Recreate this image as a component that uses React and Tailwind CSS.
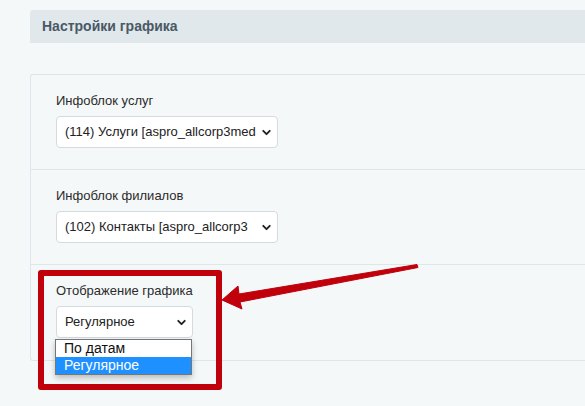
import { ChevronDown } from 'lucide-react';

function FakeSelect({ value, width }) {
  return (
    <div
      className={`${width} h-[32px] bg-white border border-[#d3dbe0] rounded-[4px] flex items-center justify-between pl-[8px] pr-[4px] text-[13px] text-[#222]`}
    >
      <span className="whitespace-nowrap">{value}</span>
      <ChevronDown size={13} strokeWidth={3.5} className="shrink-0 ml-[3px] text-[#222]" />
    </div>
  );
}

function Row({ label, children, last }) {
  return (
    <div className={`h-[95px] pl-[25px] pt-[18px] relative ${last ? '' : 'border-b border-[#dde6ea]'}`}>
      <div className="text-[13px] leading-[16px] text-[#2b2b2b] mb-[7px]">{label}</div>
      {children}
    </div>
  );
}

export default function App() {
  return (
    <div className="w-[585px] h-[406px] bg-[#f5f8f9] relative overflow-hidden font-['Liberation_Sans',Arial,sans-serif]">
      <div className="pl-[30px] pt-[10px]">
        <div className="h-[33px] bg-[#e0e8eb] rounded-tl-[3px] flex items-center pl-[12px] text-[14px] font-bold text-[#4a5866]">
          Настройки графика
        </div>

        <div className="mt-[31px] border border-r-0 border-[#dde6ea] rounded-l-[3px]">
          <Row label="Инфоблок услуг">
            <FakeSelect value="(114) Услуги [aspro_allcorp3med" width="w-[222px]" />
          </Row>
          <Row label="Инфоблок филиалов">
            <FakeSelect value="(102) Контакты [aspro_allcorp3" width="w-[222px]" />
          </Row>
          <Row label="Отображение графика" last>
            <FakeSelect value="Регулярное" width="w-[137px]" />
            {/* open options list */}
            <div className="absolute left-[24px] top-[74px] w-[137px] bg-white border border-[#767676] shadow-[0_3px_6px_rgba(0,0,0,0.25)] text-[14px] leading-[17px] text-[#111]">
              <div className="pl-[8px] h-[17px]">По датам</div>
              <div className="pl-[8px] h-[17px] bg-[#1e90ff] text-white">Регулярное</div>
            </div>
          </Row>
        </div>
      </div>

      {/* annotation frame */}
      <div className="absolute left-[38px] top-[270px] w-[184px] h-[120px] border-[6px] border-[#c0000b] rounded-[3px]" />

      {/* annotation arrow */}
      <svg className="absolute left-0 top-0" width="585" height="406" viewBox="0 0 585 406">
        <path d="M417 264.5 L418 267.5 L240 302 L242 309 L222 300 L238 286 L239 294 Z" fill="#c0000b" stroke="#c0000b" strokeWidth="1" strokeLinejoin="round" />
      </svg>
    </div>
  );
}
